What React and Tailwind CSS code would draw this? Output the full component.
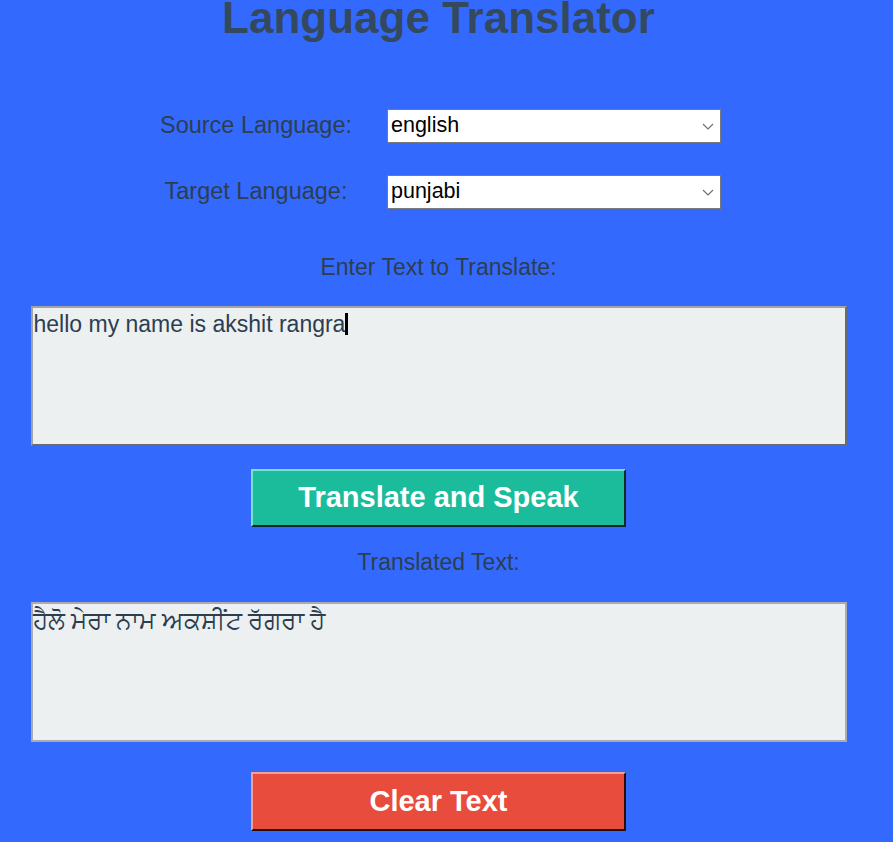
import React from 'react';

const Chevron = () => (
    <svg width="12" height="7" viewBox="0 0 12 7" className="shrink-0">
        <path d="M1 1 L6 6 L11 1" fill="none" stroke="#6d6d6d" strokeWidth="1.1" />
    </svg>
);

const SelectBox = ({ value }) => (
    <div className="w-[334px] h-[34px] bg-white border border-[#7a7a7a] flex items-center justify-between pl-[3px] pr-[6px]">
        <span className="text-[21.5px] text-black leading-none">{value}</span>
        <Chevron />
    </div>
);

const FormRow = ({ label, value, className = '' }) => (
    <div className={`flex items-center h-[34px] ${className}`}>
        <div className="w-[220px] text-center text-[23.5px] text-[#2c3e50]">{label}</div>
        <div className="w-[21px]" />
        <SelectBox value={value} />
    </div>
);

const App = () => {
    return (
        <div className="min-h-[842px] bg-[#3469fe] overflow-hidden" style={{ fontFamily: '"Liberation Sans", Arial, sans-serif' }}>
            <div className="w-[877px] flex flex-col items-center">
                <h1 className="mt-[-4px] text-[44px] leading-[44px] font-bold text-[#34495e]">Language Translator</h1>

                <div className="self-start ml-[146px] flex flex-col mt-[69px]">
                    <FormRow label="Source Language:" value="english" />
                    <FormRow label="Target Language:" value="punjabi" className="mt-[32px]" />
                </div>

                <div className="mt-[45px] text-[23px] leading-[26px] text-[#2c3e50]">Enter Text to Translate:</div>

                <div className="mt-[26px] w-[816px] h-[140px] bg-[#ecf0f1] border-2 border-t-[#a3a3a3] border-l-[#a3a3a3] border-b-[#6b6b6b] border-r-[#6b6b6b] pl-px pt-[3px]">
                    <div className="flex items-center text-[23px] leading-[26px] text-[#2c3e50]">
                        <span>hello my name is akshit rangra</span>
                        <span className="inline-block w-[3px] h-[22px] bg-black" />
                    </div>
                </div>

                <button className="mt-[23px] w-[375px] h-[58px] bg-[#1abc9c] border-2 border-t-[#76e3cd] border-l-[#76e3cd] border-b-[#0b2a24] border-r-[#0b2a24] text-white font-bold text-[29px]">
                    Translate and Speak
                </button>

                <div className="mt-[22px] text-[23px] leading-[26px] text-[#2c3e50]">Translated Text:</div>

                <div className="mt-[27px] w-[816px] h-[140px] bg-[#ecf0f1] border-2 border-[#a9adb3] pt-[1px]">
                    <div className="text-[24.5px] leading-[30px] text-[#2c3e50]" style={{ fontFamily: '"Noto Sans", "Liberation Sans", sans-serif' }}>
                        ਹੈਲੋ ਮੇਰਾ ਨਾਮ ਅਕਸ਼ੀਂਟ ਰੱਗਰਾ ਹੈ
                    </div>
                </div>

                <button className="mt-[30px] w-[375px] h-[59px] bg-[#e74c3c] border-2 border-t-[#f0a099] border-l-[#f0a099] border-b-[#2a0d0a] border-r-[#2a0d0a] text-white font-bold text-[29px]">
                    Clear Text
                </button>
            </div>
        </div>
    );
};

export default App;
